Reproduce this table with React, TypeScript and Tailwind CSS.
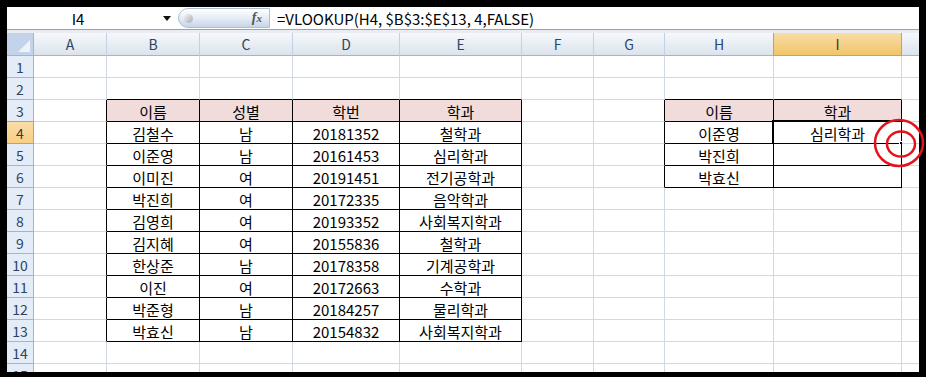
import React from 'react';

// column widths include the 1px gridline on the right; J runs off the window edge
const COLS = [
  { name: 'A', w: 'w-[73px]' },
  { name: 'B', w: 'w-[93px]' },
  { name: 'C', w: 'w-[93px]' },
  { name: 'D', w: 'w-[107px]' },
  { name: 'E', w: 'w-[122px]' },
  { name: 'F', w: 'w-[72px]' },
  { name: 'G', w: 'w-[71px]' },
  { name: 'H', w: 'w-[109px]' },
  { name: 'I', w: 'w-[128px]' },
  { name: '', w: 'w-[40px]' },
];

const students = [
  ['김철수', '남', '20181352', '철학과'],
  ['이준영', '남', '20161453', '심리학과'],
  ['이미진', '여', '20191451', '전기공학과'],
  ['박진희', '여', '20172335', '음악학과'],
  ['김영희', '여', '20193352', '사회복지학과'],
  ['김지혜', '여', '20155836', '철학과'],
  ['한상준', '남', '20178358', '기계공학과'],
  ['이진', '여', '20172663', '수학과'],
  ['박준형', '남', '20184257', '물리학과'],
  ['박효신', '남', '20154832', '사회복지학과'],
];

const lookup = [
  ['이준영', '심리학과'],
  ['박진희', ''],
  ['박효신', ''],
];

// cell values, keyed by row then column index (A = 0)
const sheet: Record<number, Record<number, string>> = {};
const put = (r: number, c: number, v: string) => {
  sheet[r] = sheet[r] || {};
  sheet[r][c] = v;
};
['이름', '성별', '학번', '학과'].forEach((v, i) => put(3, 1 + i, v));
students.forEach((row, r) => row.forEach((v, i) => put(4 + r, 1 + i, v)));
['이름', '학과'].forEach((v, i) => put(3, 7 + i, v));
lookup.forEach((row, r) => row.forEach((v, i) => put(4 + r, 7 + i, v)));

const inTable = (r: number, c: number) =>
  (r >= 3 && r <= 13 && c >= 1 && c <= 4) || (r >= 3 && r <= 6 && c >= 7 && c <= 8);

const isHeader = (r: number, c: number) => r === 3 && inTable(r, c);

const ROWS = Array.from({ length: 15 }, (_, i) => i + 1);

const FONT = "font-['Noto_Sans_CJK_KR',sans-serif]";

const FormulaBar = () => (
  <div className="flex h-[22px] items-center bg-white">
    <span className="w-[142px] shrink-0 text-center text-[15px] leading-none text-black">I4</span>
    <svg width="8" height="5" viewBox="0 0 8 5" className="ml-[14px] shrink-0">
      <path d="M0 0 H8 L4 5 Z" fill="#111" />
    </svg>
    <div className="ml-[7px] flex h-[20px] w-[92px] shrink-0 items-center rounded-l-full border border-[#aebfd5] bg-gradient-to-b from-[#ffffff] via-[#e6edf6] to-[#c6d4e7]">
      <span className="ml-[5px] h-[9px] w-[9px] rounded-full bg-gradient-to-br from-[#f4f4f4] to-[#a9adb3]" />
      <span className="ml-auto mr-[7px] font-['Liberation_Serif',serif] text-[14px] font-bold italic leading-none text-[#555]">
        f<span className="text-[11px]">x</span>
      </span>
    </div>
    <span className="ml-[7px] whitespace-nowrap text-[15px] leading-none text-black">=VLOOKUP(H4, $B$3:$E$13, 4,FALSE)</span>
  </div>
);

const ColumnHeaders = () => (
  <div className="flex h-[23px]">
    <div className="relative w-[27px] shrink-0 border-b border-r border-[#9eb6ce] bg-[#c3d4ea]">
      <svg width="12" height="12" viewBox="0 0 12 12" className="absolute bottom-[3px] right-[3px]">
        <path d="M12 0 V12 H0 Z" fill="#eef3fa" />
      </svg>
    </div>
    {COLS.map((c, i) => {
      const sel = i === 8;
      return (
        <div
          key={i}
          className={`${c.w} flex shrink-0 items-center justify-center border-b border-r text-[14px] leading-none ${
            sel
              ? 'border-[#f29436] bg-gradient-to-b from-[#f9dca6] to-[#f1c568] text-[#3a3a3a]'
              : `border-b-[#9eb6ce] ${i === 7 ? 'border-r-[#f29436]' : 'border-r-[#c3d1e2]'} bg-gradient-to-b from-[#f6f8fb] to-[#dce3ed] text-[#2c4564]`
          }`}
        >
          {c.name}
        </div>
      );
    })}
  </div>
);

const Row = ({ r }: { r: number }) => {
  const sel = r === 4;
  return (
    <div className="flex h-[22px]">
      <div
        className={`flex w-[27px] shrink-0 items-center justify-center border-b border-r text-[14px] leading-none ${
          sel
            ? 'border-[#f29436] border-t -mt-px h-[23px] bg-gradient-to-b from-[#fbdda8] to-[#f8cf83] text-[#3a3a3a]'
            : 'border-[#9eb6ce] bg-[#e4ecf7] text-[#2c4564]'
        }`}
      >
        {r}
      </div>
      {COLS.map((c, i) => {
        const v = sheet[r]?.[i] ?? '';
        const rightDark = inTable(r, i) || inTable(r, i + 1);
        const bottomDark = inTable(r, i) || inTable(r + 1, i);
        const active = r === 4 && i === 8;
        return (
          <div
            key={i}
            className={`${c.w} relative flex shrink-0 items-center justify-center border-b border-r text-[15px] leading-none text-black ${
              rightDark ? 'border-r-black' : 'border-r-[#d0d7e5]'
            } ${bottomDark ? 'border-b-black' : 'border-b-[#d0d7e5]'} ${
              isHeader(r, i) ? 'bg-[#f2dcdb]' : 'bg-white'
            }`}
          >
            <span className="pt-[1px]">{v}</span>
            {active && (
              <>
                <div className="pointer-events-none absolute -left-[2px] -top-[2px] bottom-[-2px] right-[-2px] border-2 border-black">
                  <div className="h-full w-full border border-white" />
                </div>
                <div className="absolute -bottom-[4px] -right-[4px] h-[6px] w-[6px] border border-white bg-black" />
              </>
            )}
          </div>
        );
      })}
    </div>
  );
};

export default function App() {
  return (
    <div className={`relative h-[377px] w-[926px] overflow-hidden bg-black pl-[7px] pt-[7px] ${FONT}`}>
      <div className="h-[365px] w-[912px] overflow-hidden bg-white">
        <FormulaBar />
        <div className="h-[1px] bg-[#8ea3bd]" />
        <div className="h-[3px] bg-[#e9edf3]" />
        <ColumnHeaders />
        {ROWS.map(r => (
          <Row key={r} r={r} />
        ))}
      </div>
      <svg className="pointer-events-none absolute left-0 top-0" width="926" height="377">
        <ellipse cx="899" cy="143" rx="24" ry="23" fill="none" stroke="#e3121b" strokeWidth="2.5" />
        <ellipse cx="901" cy="144" rx="14" ry="12.5" fill="none" stroke="#e3121b" strokeWidth="2.5" />
      </svg>
    </div>
  );
}
